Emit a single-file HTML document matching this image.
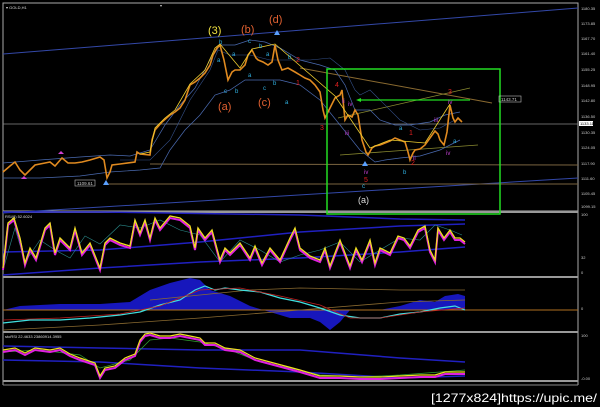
<!DOCTYPE html>
<html><head><meta charset="utf-8"><style>
html,body{margin:0;padding:0;background:#000;width:600px;height:407px;overflow:hidden}
svg{display:block}
text{font-family:"Liberation Sans",sans-serif}
</style></head><body>
<svg width="600" height="407" viewBox="0 0 600 407" xmlns="http://www.w3.org/2000/svg">
<rect width="600" height="407" fill="#000"/>
<rect x="3" y="3" width="575" height="208" fill="none" stroke="#aaa" stroke-width="1"/>
<line x1="578" y1="3" x2="578" y2="385" stroke="#aaa"/>
<line x1="3" y1="211" x2="3" y2="385" stroke="#aaa"/>
<line x1="3" y1="212" x2="578" y2="212" stroke="#999" stroke-width="2"/>
<line x1="3" y1="277" x2="578" y2="277" stroke="#999" stroke-width="2"/>
<line x1="3" y1="332" x2="578" y2="332" stroke="#999" stroke-width="2"/>
<line x1="3" y1="381" x2="578" y2="381" stroke="#999" stroke-width="2"/>
<line x1="3" y1="385" x2="578" y2="385" stroke="#888" stroke-width="1"/>
<text x="6" y="9" font-size="4" fill="#ddd">▾ GOLD,H1</text>
<text x="160" y="7" font-size="4" fill="#ccc">▾</text>
<g font-size="4" fill="#ccc">
<text x="581" y="10">1180.35</text><text x="581" y="25">1173.85</text><text x="581" y="40">1167.70</text>
<text x="581" y="55">1161.40</text><text x="581" y="71">1155.25</text><text x="581" y="87">1148.95</text>
<text x="581" y="102">1142.80</text><text x="581" y="118">1136.50</text><text x="581" y="134">1130.35</text>
<text x="581" y="149">1124.05</text><text x="581" y="165">1117.90</text><text x="581" y="180">1111.60</text>
<text x="581" y="195">1105.45</text><text x="581" y="208">1099.15</text>
<text x="581" y="216">100</text><text x="581" y="259">32</text><text x="581" y="274">0</text>
<text x="581" y="310">0</text><text x="581" y="337">100</text><text x="581" y="380">-0.00</text>
</g>
<rect x="579" y="121" width="14" height="5" fill="#fff"/>
<text x="580" y="125" font-size="4" fill="#000">1133.11</text>
<line x1="3" y1="54" x2="578" y2="8" stroke="#3348a8" stroke-width="1"/>
<line x1="3" y1="213" x2="578" y2="178" stroke="#3348a8" stroke-width="1"/>
<line x1="3" y1="124" x2="578" y2="124" stroke="#888" stroke-width="0.7"/>
<line x1="150" y1="164" x2="578" y2="165" stroke="#7a6440" stroke-width="1"/>
<line x1="107" y1="184" x2="578" y2="184" stroke="#7a6440" stroke-width="1"/>
<line x1="300" y1="68" x2="492" y2="103" stroke="#8a6a30" stroke-width="1"/>
<line x1="338" y1="118" x2="470" y2="88" stroke="#8a8a30" stroke-width="0.7"/>
<line x1="340" y1="155" x2="478" y2="145" stroke="#8a8a30" stroke-width="0.8"/>
<polyline fill="none" stroke="#4a6ab0" stroke-width="0.7" points="3,163 40,160 80,157 110,155 130,156 150,150 165,125 180,105 195,88 210,60 220,45 235,45 250,40 265,42 280,48 300,60 320,65 335,70 345,85 355,110 370,110 380,120 395,125 410,125 430,122 445,115 460,112"/>
<polyline fill="none" stroke="#4a6ab0" stroke-width="0.7" points="3,178 40,178 80,176 110,172 140,170 160,168 170,150 185,130 200,115 215,95 230,90 245,80 260,80 280,80 300,85 320,100 340,125 360,150 375,162 385,160 400,158 420,156 440,150 460,140"/>
<polyline fill="none" stroke="#34508a" stroke-width="0.6" points="120,160 150,160 170,140 190,100 210,70 218,50 230,55 250,55 270,60 290,60 310,60 330,58 345,70 355,90 360,95 370,90 380,100 400,120 420,130 440,128 455,120"/>
<polyline fill="none" stroke="#e08a20" stroke-width="1.6" points="3,172 10,166 15,162 20,170 25,175 30,170 35,165 45,163 50,162 55,166 62,158 68,163 75,163 82,162 90,160 100,157 104,160 107,178 110,172 112,165 120,164 135,162 137,152 140,154 150,155 152,140 155,130 162,122 170,115 175,112 180,108 185,100 190,85 195,82 200,78 205,73 210,65 213,55 217,48 220,45 224,60 228,80 232,72 235,70 240,70 245,65 248,55 252,50 256,58 258,60 263,62 268,65 272,62 275,45 278,60 282,70 288,68 295,72 300,75 305,78 310,80 315,85 320,92 323,110 325,118 330,108 335,98 340,95 342,90 345,120 348,115 352,117 355,110 358,115 362,140 366,152 368,155 372,148 375,146 380,145 385,143 390,141 395,138 400,140 405,142 408,152 410,160 413,153 415,150 420,149 425,145 430,138 435,131 438,134 440,140 444,145 447,132 450,105 453,118 455,122 458,118 462,122"/>
<polyline fill="none" stroke="#f0d030" stroke-width="0.8" points="140,154 150,152 155,128 165,118 175,110 190,84 205,70 215,48 220,44 240,68 252,49 275,44 335,96 370,148 390,140 425,143 450,104"/>
<rect x="327" y="69" width="173" height="145" fill="none" stroke="#22dd22" stroke-width="1.5"/>
<line x1="358" y1="100" x2="470" y2="100" stroke="#22dd22" stroke-width="1.3"/>
<polygon points="356,100 361,98 361,102" fill="#22dd22"/>
<rect x="499" y="96" width="22" height="6" fill="none" stroke="#bbb" stroke-width="0.6"/>
<text x="501" y="101" font-size="4.5" fill="#ccc">1143.71</text>
<rect x="75" y="180" width="20" height="6" fill="none" stroke="#bbb" stroke-width="0.6"/>
<text x="77" y="185" font-size="4.5" fill="#ccc">1109.61</text>
<g fill="#5aa0ff"><polygon points="106,180 103,185 109,185"/><polygon points="277,30 274,35 280,35"/><polygon points="365,161 362,166 368,166"/></g>
<g fill="#d040d0"><polygon points="61,151 58,154 64,154"/><polygon points="24,176 21,179 27,179"/></g>
<g font-size="11">
<text x="208" y="34" fill="#f0e040">(3)</text>
<text x="241" y="33" fill="#e06030">(b)</text>
<text x="269" y="23" fill="#e06030">(d)</text>
<text x="218" y="110" fill="#e06030">(a)</text>
<text x="258" y="106" fill="#e06030">(c)</text>
<text x="358" y="203" fill="#ddd" font-size="9">(a)</text>
</g>
<g font-size="6" fill="#30b0e0">
<text x="219" y="44">b</text><text x="217" y="62">a</text><text x="232" y="56">a</text><text x="224" y="93">c</text><text x="235" y="93">b</text>
<text x="248" y="43">c</text><text x="259" y="48">b</text><text x="266" y="56">a</text><text x="248" y="77">a</text><text x="263" y="90">c</text><text x="273" y="85">b</text>
<text x="285" y="104">a</text><text x="288" y="59">b</text><text x="399" y="130">a</text><text x="403" y="174">b</text><text x="362" y="188">c</text><text x="453" y="143">a</text>
</g>
<g font-size="7" fill="#e02020">
<text x="296" y="62">2</text><text x="296" y="85">1</text><text x="320" y="130">3</text><text x="335" y="87">4</text>
<text x="409" y="135">1</text><text x="411" y="165">2</text><text x="364" y="182">5</text><text x="448" y="94">3</text>
</g>
<g font-size="6" fill="#c040d0">
<text x="342" y="103">ii</text><text x="348" y="106">iv</text><text x="345" y="135">iii</text><text x="364" y="174">iv</text>
<text x="413" y="160">ii</text><text x="434" y="122">iii</text><text x="446" y="155">iv</text><text x="448" y="104">iv</text>
</g>
<text x="5" y="218" font-size="4" fill="#ddd">RSI(8) 52.6024</text>
<polyline fill="none" stroke="#2020c0" stroke-width="1.5" points="3,252 100,250 200,242 300,232 400,226 465,224"/>
<polyline fill="none" stroke="#2020c0" stroke-width="1.5" points="3,275 100,268 200,262 300,258 400,252 465,247"/>
<polyline fill="none" stroke="#2020c0" stroke-width="1.5" points="3,212 100,212 300,215 400,219 465,220"/>
<polyline fill="none" stroke="#2a8a8a" stroke-width="0.6" points="3,270 15,228 25,262 40,240 55,250 70,258 85,236 100,244 120,225 140,228 160,220 180,230 200,235 220,262 240,240 260,250 280,262 300,255 320,250 340,242 360,262 380,250 400,238 420,240 435,225 450,230 462,235"/>
<polyline fill="none" stroke="#e020e0" stroke-width="2" points="3,270 8,225 14,220 20,240 25,265 30,250 36,260 45,230 50,225 55,255 60,240 70,250 75,230 82,255 90,245 100,270 105,245 110,240 120,245 130,248 135,222 140,235 145,222 150,240 155,220 160,230 170,218 180,220 190,228 195,250 198,230 205,240 212,232 220,262 225,250 230,255 240,245 250,260 255,248 262,265 270,250 280,262 290,240 295,230 300,250 310,258 320,262 325,250 330,268 340,242 345,255 350,268 356,250 362,262 370,242 375,265 380,250 390,255 398,238 404,240 410,248 418,232 425,228 430,252 435,262 438,230 444,240 450,232 455,240 460,240 465,244"/>
<polyline fill="none" stroke="#f0e020" stroke-width="1.3" points="3,268 8,223 14,218 20,238 25,263 30,248 36,258 45,228 50,223 55,253 60,238 70,248 75,228 82,253 90,243 100,268 105,243 110,238 120,243 130,246 135,220 140,233 145,220 150,238 155,218 160,228 170,216 180,218 190,226 195,248 198,228 205,238 212,230 220,260 225,248 230,253 240,243 250,258 255,246 262,263 270,248 280,260 290,238 295,228 300,248 310,256 320,260 325,248 330,266 340,240 345,253 350,266 356,248 362,260 370,240 375,263 380,248 390,253 398,236 404,238 410,246 418,230 425,226 430,250 435,260 438,228 444,238 450,230 455,238 460,238 465,242"/>
<path d="M3,310 L20,306 L60,304 L100,304 L130,302 L150,290 L170,283 L190,278 L200,280 L210,290 L230,296 L250,306 L270,312 L290,318 L310,318 L320,322 L330,330 L340,322 L350,310 L380,310 L400,306 L420,300 L435,302 L445,296 L458,294 L465,296 L465,310 Z" fill="#1a1ad0" opacity="0.9"/>
<line x1="3" y1="310" x2="578" y2="310" stroke="#b07020" stroke-width="1"/>
<polyline fill="none" stroke="#8a6a30" stroke-width="0.8" points="3,330 100,325 200,318 300,310 400,302 465,300"/>
<polyline fill="none" stroke="#8a6a30" stroke-width="0.8" points="150,300 250,290 300,288 400,290 465,290"/>
<polyline fill="none" stroke="#40e0e0" stroke-width="1.2" points="3,323 30,320 60,320 90,318 120,315 140,312 160,305 180,300 195,290 205,286 215,290 225,288 240,290 260,292 280,298 300,302 320,308 340,315 360,318 380,318 400,314 420,312 440,308 455,306 465,310"/>
<polyline fill="none" stroke="#c02020" stroke-width="0.8" points="3,320 60,318 120,314 160,306 200,290 240,288 280,296 320,305 350,318 380,318 420,312 465,308"/>
<text x="5" y="338" font-size="4" fill="#ddd">stoRSI 22.4633 23860914.3955</text>
<polyline fill="none" stroke="#2020c0" stroke-width="1.5" points="3,346 100,348 200,350 300,350 400,358 465,362"/>
<polyline fill="none" stroke="#2020c0" stroke-width="1.5" points="3,360 100,362 200,368 300,372 400,378 465,376"/>
<polyline fill="none" stroke="#30a030" stroke-width="0.7" points="3,352 40,350 80,355 100,368 130,360 150,340 170,338 200,342 230,350 260,362 290,368 320,375 360,377 400,375 440,372 465,370"/>
<polyline fill="none" stroke="#e020e0" stroke-width="2" points="3,352 15,350 25,355 35,350 50,352 60,350 70,356 80,360 95,365 100,378 105,370 115,368 125,360 135,356 140,342 145,336 150,335 160,338 170,338 180,336 190,338 200,340 205,345 215,345 225,350 240,352 255,360 270,364 285,368 300,372 320,378 340,378 360,379 380,379 400,378 420,377 435,377 445,374 455,374 465,374"/>
<polyline fill="none" stroke="#f0e020" stroke-width="1.2" points="3,350 15,348 25,353 35,348 50,350 60,348 70,354 80,358 95,363 100,376 105,368 115,366 125,358 135,354 140,340 145,334 150,333 160,336 170,336 180,334 190,336 200,338 205,343 215,343 225,348 240,350 255,358 270,362 285,366 300,370 320,376 340,376 360,377 380,377 400,376 420,375 435,375 445,372 455,372 465,372"/>
<text x="431" y="402" font-size="12" fill="#fff" textLength="166" lengthAdjust="spacingAndGlyphs">[1277x824]https://upic.me/</text>
</svg>
</body></html>
